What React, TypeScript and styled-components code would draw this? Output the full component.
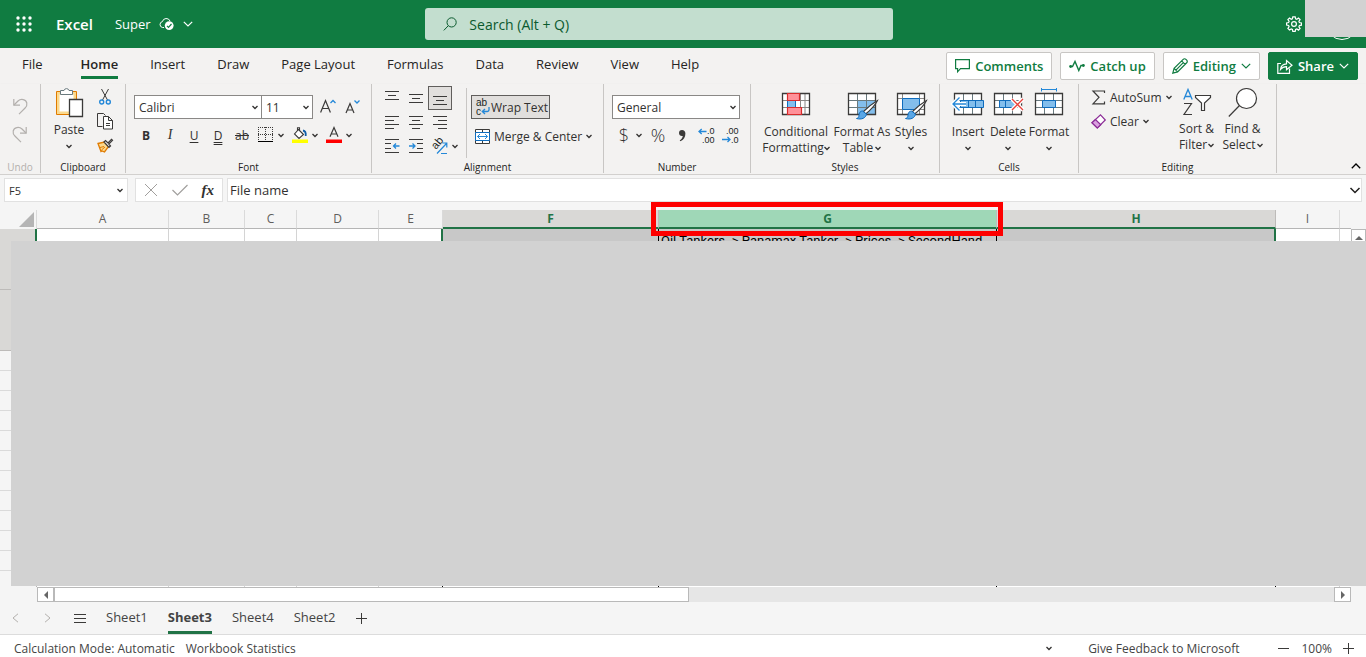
import React from "react";
import styled, { createGlobalStyle, css } from "styled-components";

const font = `"Open Sans", "Noto Sans", sans-serif`;
const green = "#107c41";
const blue = "#2488d8";
const ink = "#3b3a39";

const GlobalStyle = createGlobalStyle`
  *, *::before, *::after { box-sizing: border-box; }
  body { margin: 0; font-family: ${font}; font-size: 12px; color: #323130; background: #f3f2f1; }
  button, input, select { font-family: inherit; font-size: inherit; color: inherit; }
  button { background: none; border: 0; padding: 0; }
  svg { display: block; flex: none; overflow: visible; }
`;

/* ---------- shared pieces ---------- */

type IconProps = { w: number; h: number; color?: string; sharp?: boolean; children: React.ReactNode };
const Icon = ({ w, h, color = ink, sharp, children }: IconProps) => (
  <svg
    width={w}
    height={h}
    viewBox={`0 0 ${w} ${h}`}
    fill="none"
    stroke={color}
    strokeWidth={1}
    shapeRendering={sharp ? "crispEdges" : undefined}
    aria-hidden="true"
  >
    {children}
  </svg>
);

const Caret = () => (
  <Icon w={6} h={5} color="#323130">
    <path d="M.5 1 3 3.500 5.500 1" strokeWidth="1.300" />
  </Icon>
);

const WideCaret = ({ color }: { color: string }) => (
  <Icon w={10} h={6} color={color}>
    <path d="M.8.8 5 5 9.2.8" strokeWidth="1.2" />
  </Icon>
);

/* ---------- page ---------- */

const Page = styled.div`
  position: relative;
  display: flex;
  flex-direction: column;
  height: 100vh;
  min-width: 1280px;
  overflow: hidden;
`;

/* ---------- title bar ---------- */

const TitleBar = styled.header`
  display: grid;
  grid-template-columns: 9fr 468px 10fr;
  align-items: center;
  height: 48px;
  flex: none;
  background: ${green};
  color: #fff;
`;

const TitleLeft = styled.div`
  display: flex;
  align-items: center;
  padding-left: 16px;
`;

const AppName = styled.span`
  margin-left: 24px;
  font-size: 15px;
  font-weight: 600;
`;

const DocButton = styled.button`
  display: flex;
  align-items: center;
  gap: 8px;
  margin-left: 22px;
  font-size: 13px;
`;

const SearchBox = styled.label`
  display: flex;
  align-items: center;
  gap: 12px;
  height: 32px;
  padding: 0 18px;
  border-radius: 3px;
  background: #c3decf;
`;

const SearchInput = styled.input`
  flex: 1;
  border: 0;
  outline: 0;
  padding: 0;
  background: transparent;
  font-size: 14px;
  &::placeholder { color: #0b5a2e; opacity: 1; }
`;

const TitleRight = styled.div`
  display: flex;
  align-items: center;
  justify-content: flex-end;
  gap: 24px;
  padding-right: 8px;
`;

const Avatar = styled.span`
  width: 32px;
  height: 32px;
  border: 1px solid #fff;
  border-radius: 50%;
`;

const AccountMask = styled.div`
  position: absolute;
  top: 0;
  right: 0;
  width: 61px;
  height: 37px;
  background: #d2d2d2;
`;

/* ---------- ribbon tabs ---------- */

const TabRow = styled.div`
  display: flex;
  justify-content: space-between;
  flex: none;
  height: 36px;
  padding: 0 8px 0 6px;
`;

const TabList = styled.nav`
  display: flex;
`;

const Tab = styled.button<{ $active?: boolean }>`
  position: relative;
  height: 32px;
  padding: 0 16px;
  font-size: 13px;
  font-weight: ${(p) => (p.$active ? 600 : 400)};
  color: #252423;
  ${(p) =>
    p.$active &&
    css`
      margin-left: 6px;
      &::after {
        content: "";
        position: absolute;
        left: 16px;
        right: 16px;
        bottom: 1px;
        height: 3px;
        background: ${green};
      }
    `}
`;

const Actions = styled.div`
  display: flex;
  gap: 8px;
  padding-top: 4px;
`;

const ActionButton = styled.button<{ $solid?: boolean }>`
  display: flex;
  align-items: center;
  gap: 5px;
  height: 28px;
  padding: 0 8px;
  border: 1px solid ${(p) => (p.$solid ? green : "#c8c6c4")};
  border-radius: 2px;
  background: ${(p) => (p.$solid ? green : "#fff")};
  color: ${(p) => (p.$solid ? "#fff" : green)};
  font-size: 13px;
  font-weight: 600;
`;

/* ---------- ribbon ---------- */

const Ribbon = styled.div`
  display: flex;
  flex: none;
  height: 91px;
  border-bottom: 1px solid #d2d0ce;
  box-shadow: 0 1px 2px rgba(0, 0, 0, 0.12);
`;

const GroupBox = styled.section<{ $w: number }>`
  display: flex;
  flex-direction: column;
  justify-content: space-between;
  width: ${(p) => p.$w}px;
  height: 89px;
  border-right: 1px solid #c8c6c4;
`;

const GroupBody = styled.div<{ $gap?: number; $left?: number }>`
  display: flex;
  gap: ${(p) => p.$gap ?? 0}px;
  padding-left: ${(p) => p.$left ?? 8}px;
`;

const GroupLabel = styled.div<{ $muted?: boolean }>`
  font-size: 10px;
  line-height: 12px;
  text-align: center;
  color: ${(p) => (p.$muted ? "#b3b0ad" : "#252423")};
`;

type GroupProps = { w: number; label: string; muted?: boolean; gap?: number; left?: number; children: React.ReactNode };
const Group = ({ w, label, muted, gap, left, children }: GroupProps) => (
  <GroupBox $w={w}>
    <GroupBody $gap={gap} $left={left}>{children}</GroupBody>
    <GroupLabel $muted={muted}>{label}</GroupLabel>
  </GroupBox>
);

const Stack = styled.div<{ $gap?: number; $top?: number }>`
  display: flex;
  flex-direction: column;
  gap: ${(p) => p.$gap ?? 0}px;
  padding-top: ${(p) => p.$top ?? 0}px;
`;

const Line = styled.div<{ $gap?: number }>`
  display: flex;
  align-items: center;
  gap: ${(p) => p.$gap ?? 0}px;
`;

const TallRow = styled.div<{ $gap?: number }>`
  display: flex;
  align-items: flex-start;
  gap: ${(p) => p.$gap ?? 0}px;
`;

const SizeTools = styled.div`
  display: flex;
  gap: 1px;
  margin-left: 3px;
`;

const IconButton = styled.button<{ $on?: boolean }>`
  display: flex;
  align-items: center;
  justify-content: center;
  width: 24px;
  height: 24px;
  border: 1px solid ${(p) => (p.$on ? "#605e5c" : "transparent")};
  background: ${(p) => (p.$on ? "#e1dfdd" : "transparent")};
`;

const CaretButton = styled.button<{ $w?: number }>`
  display: flex;
  align-items: center;
  justify-content: flex-start;
  width: ${(p) => p.$w ?? 10}px;
  height: 24px;
`;

const FormatButton = styled(IconButton)<{ $kind: "bold" | "italic" | "under" | "double" | "strike" }>`
  font-size: 12px;
  text-underline-offset: 2px;
  ${(p) => p.$kind === "bold" && "font-weight: 700;"}
  ${(p) => p.$kind === "italic" && "font-style: italic; font-family: 'Liberation Serif', serif; font-size: 14px;"}
  ${(p) => p.$kind === "under" && "text-decoration: underline;"}
  ${(p) => p.$kind === "double" && "text-decoration: underline double;"}
  ${(p) => p.$kind === "strike" && "text-decoration: line-through;"}
`;

const NumberButton = styled(IconButton)`
  font-size: 18px;
  font-weight: 300;
  line-height: 20px;
`;

const TallButton = styled.button<{ $w: number; $icon?: number }>`
  display: flex;
  flex-direction: column;
  align-items: center;
  width: ${(p) => p.$w}px;
  line-height: 16px;
  white-space: nowrap;
  & > svg:first-child { margin-bottom: ${(p) => p.$icon ?? 3}px; }
  & > svg:last-child { margin-top: 6px; }
`;

const RowButton = styled.button<{ $on?: boolean }>`
  display: flex;
  align-items: center;
  gap: ${(p) => (p.$on ? 2 : 4)}px;
  width: ${(p) => (p.$on ? "79px" : "auto")};
  height: 24px;
  padding: 0 3px;
  border: 1px solid ${(p) => (p.$on ? "#605e5c" : "transparent")};
  background: ${(p) => (p.$on ? "#e1dfdd" : "transparent")};
  white-space: nowrap;
`;

const InnerRule = styled.span`
  width: 1px;
  height: 70px;
  margin: 4px 4px 0 6px;
  background: #c8c6c4;
`;

const Combo = styled.span<{ $w: number; $joined?: boolean }>`
  display: flex;
  align-items: center;
  width: ${(p) => p.$w}px;
  height: 24px;
  border: 1px solid #8a8886;
  border-left-width: ${(p) => (p.$joined ? 0 : 1)}px;
  background: #fff;
  & > svg { margin-left: -9px; margin-right: 3px; pointer-events: none; }
`;

const ComboSelect = styled.select`
  flex: 1;
  min-width: 0;
  height: 22px;
  padding: 0 4px;
  border: 0;
  outline: 0;
  appearance: none;
  background: transparent;
`;

type SelectProps = { w: number; label: string; value: string; joined?: boolean };
const DropDown = ({ w, label, value, joined }: SelectProps) => (
  <Combo $w={w} $joined={joined}>
    <ComboSelect aria-label={label} defaultValue={value}>
      <option>{value}</option>
    </ComboSelect>
    <Caret />
  </Combo>
);

const Collapse = styled.button`
  align-self: flex-end;
  margin: 0 5px 5px auto;
`;

/* ---------- formula bar ---------- */

const FormulaBar = styled.div`
  display: flex;
  flex: none;
  gap: 4px;
  height: 35px;
  padding: 3px 4px 8px;
  background: #f5f5f5;
`;

const BarBox = styled.div<{ $w?: number }>`
  display: flex;
  align-items: center;
  ${(p) => (p.$w ? `width: ${p.$w}px;` : "flex: 1;")}
  height: 24px;
  border: 1px solid #e1e1e1;
  background: #fff;
`;

const NameBox = styled(BarBox)`
  margin-right: 3px;
  padding-right: 4px;
`;

const FormulaTools = styled(BarBox)`
  justify-content: space-between;
  padding: 0 8px;
`;

const BarInput = styled.input<{ $small?: boolean }>`
  flex: 1;
  min-width: 0;
  height: 22px;
  padding: 0 ${(p) => (p.$small ? 4 : 2)}px;
  border: 0;
  outline: 0;
  background: transparent;
  font-size: ${(p) => (p.$small ? 11 : 13)}px;
`;

const FxMark = styled.button`
  font-family: "Liberation Serif", serif;
  font-size: 15px;
  font-style: italic;
  font-weight: 700;
`;

/* ---------- sheet grid ---------- */

const GridArea = styled.main`
  position: relative;
  display: flex;
  flex: 1;
  min-height: 0;
  background: #f5f5f5;
`;

const GridClip = styled.div`
  flex: 1;
  min-width: 0;
  contain: size;
  clip-path: inset(-20px 0 0 0);
`;

const Sheet = styled.table`
  width: 100%;
  table-layout: fixed;
  border-collapse: separate;
  border-spacing: 0;
`;

const ColumnHead = styled.th<{ $state?: "selected" | "marked"; $last?: boolean }>`
  position: relative;
  height: 19px;
  padding: 0;
  border-right: ${(p) => (p.$last ? "0" : "1px solid #dadada")};
  border-bottom: 1px solid #b5b5b5;
  font-size: 12px;
  font-weight: 400;
  line-height: 16px;
  color: #605e5c;
  ${(p) =>
    p.$state &&
    css`
      border-right-color: #bdbbb9;
      border-bottom: 2px solid #217346;
      background: ${p.$state === "marked" ? "#9fd7b7" : "#d9d8d6"};
      color: #217346;
      font-weight: 700;
    `}
`;

const HighlightFrame = styled.span`
  position: absolute;
  inset: -8px -7px -9px -8px;
  z-index: 1;
  border: 5px solid #fe0000;
`;

const CornerCell = styled.th`
  padding: 0 2px 0 0;
  height: 19px;
  border-right: 1px solid #dadada;
  & > svg { margin-left: auto; }
`;

const RowHead = styled.th<{ $tall?: boolean }>`
  height: ${(p) => (p.$tall ? 61 : 20)}px;
  border-bottom: 1px solid ${(p) => (p.$tall ? "#bdbbb9" : "#dadada")};
  border-right: ${(p) => (p.$tall ? "2px solid #217346" : "1px solid #b5b5b5")};
  background: ${(p) => (p.$tall ? "#d9d8d6" : "#f5f5f5")};
`;

const Cell = styled.td<{ $sel?: boolean; $right: string }>`
  padding: 3px 2px 0;
  border-right: ${(p) => p.$right};
  border-bottom: 1px solid #d4d4d4;
  background: ${(p) => (p.$sel ? "#c8c8c8" : "#fff")};
  vertical-align: top;
  font-family: Roboto, sans-serif;
  font-size: 13px;
  line-height: 18px;
  white-space: nowrap;
  color: #000;
`;

const VerticalBar = styled.div`
  width: 15px;
  padding-top: 19px;
`;

const ArrowButton = styled.button<{ $w: number; $h: number }>`
  display: flex;
  align-items: center;
  justify-content: center;
  width: ${(p) => p.$w}px;
  height: ${(p) => p.$h}px;
  border: 1px solid #b9b9b9;
  background: #fff;
`;

const GridMask = styled.div`
  position: absolute;
  top: 31px;
  left: 11px;
  right: 0;
  bottom: 1px;
  z-index: 2;
  background: #d2d2d2;
`;

const HorizontalBar = styled.div`
  display: flex;
  flex: none;
  height: 15px;
  padding: 0 15px 0 37px;
  background: #f5f5f5;
`;

const Track = styled.div`
  flex: 1;
  background: #e6e6e6;
`;

const Thumb = styled.div`
  width: 50%;
  max-width: 635px;
  height: 15px;
  border: 1px solid #b9b9b9;
  background: #fff;
`;

/* ---------- sheet tabs and status bar ---------- */

const SheetBar = styled.nav`
  display: flex;
  align-items: center;
  flex: none;
  height: 33px;
  padding-left: 12px;
  border-bottom: 1px solid #dcdcdc;
  background: #f5f5f5;
`;

const NavButton = styled.button<{ $w: number }>`
  display: flex;
  align-items: center;
  width: ${(p) => p.$w}px;
  height: 24px;
`;

const SheetTab = styled.button<{ $active?: boolean }>`
  height: 32px;
  margin-right: 20px;
  padding: 2px 0 1px;
  border-bottom: 3px solid ${(p) => (p.$active ? "#217346" : "transparent")};
  font-size: 13px;
  font-weight: ${(p) => (p.$active ? 700 : 400)};
  color: #444;
`;

const StatusBar = styled.footer`
  display: flex;
  align-items: center;
  flex: none;
  height: 22px;
  padding: 4px 12px 0 14px;
  background: #fff;
  color: #444;
  font-size: 12px;
`;

const StatusItem = styled.button`
  margin-right: 11px;
`;

const StatusRight = styled.div`
  display: flex;
  align-items: center;
  margin-left: auto;
`;

const Feedback = styled.button`
  margin: 0 39px 0 36px;
`;

const Zoom = styled.span`
  margin: 0 11px 0 12px;
`;

/* ---------- drawings ---------- */

const Waffle = () => (
  <svg width="16" height="16" viewBox="0 0 16 16" fill="#fff" aria-hidden="true">
    {[2, 8, 14].map((y) => [2, 8, 14].map((x) => <circle key={`${x}-${y}`} cx={x} cy={y} r="1.7" />))}
  </svg>
);

const CloudSaved = () => (
  <Icon w={16} h={14} color="#fff">
    <path d="M5 10.5H3.6A3 3 0 0 1 3.4 4.6 4 4 0 0 1 11 4" />
    <circle cx="10.2" cy="8.6" r="4.4" fill="#fff" stroke="none" />
    <path d="M8 8.8l1.5 1.6 3-3.4" stroke={green} strokeWidth="1.2" />
  </Icon>
);

const SearchIcon = () => (
  <Icon w={14} h={15} color="#0b5a2e">
    <circle cx="8.6" cy="5.4" r="4.6" />
    <path d="M5.3 8.7.8 13.4" />
  </Icon>
);

const Gear = () => (
  <Icon w={16} h={16} color="#fff">
    <path
      d="M6.8.8h2.4l.4 2 1.2.5L12.5 2l1.6 1.6-1.2 1.7.5 1.2 2 .4v2.3l-2 .4-.5 1.2 1.2 1.7-1.6 1.6-1.7-1.2-1.2.5-.4 2H6.8l-.4-2-1.2-.5L3.5 14l-1.6-1.6 1.2-1.7-.5-1.2-2-.4V6.9l2-.4.5-1.2L1.9 3.6 3.5 2l1.7 1.2 1.2-.5z"
      strokeWidth="1.2"
    />
    <circle cx="8" cy="8" r="2.4" strokeWidth="1.2" />
  </Icon>
);

const CommentIcon = () => (
  <Icon w={15} h={14} color={green}>
    <path d="M.6.6h13.8v9H5.5L2.6 12.8V9.6H.6z" strokeWidth="1.2" />
  </Icon>
);

const PulseIcon = () => (
  <Icon w={16} h={12} color={green}>
    <path d="M1.5 6.5h2L6 1.5 9.8 10.5 12 5.5h2.5" strokeWidth="1.4" />
    <circle cx="1.6" cy="6.5" r="1.4" fill={green} stroke="none" />
    <circle cx="14.4" cy="5.5" r="1.4" fill={green} stroke="none" />
  </Icon>
);

const PencilIcon = () => (
  <Icon w={16} h={16} color={green}>
    <path d="M.8 15.2l1.3-4.8L11.2 1.3a1.9 1.9 0 0 1 2.7 0l.8.8a1.9 1.9 0 0 1 0 2.7L5.6 13.9zM9.6 2.9l3.5 3.5M2.1 10.4l3.5 3.5M3.9 12.1l7.4-7.4" strokeWidth="1.2" />
  </Icon>
);

const ShareIcon = () => (
  <Icon w={16} h={15} color="#fff">
    <path d="M4 4.5H.8v9.9h11.7V9.5" strokeWidth="1.2" />
    <path d="M3.5 10.5c.4-3.8 2.8-5.6 6-5.7V1.5l5.5 4.8-5.5 4.5V7.6c-2.5 0-4.3.7-6 2.9z" strokeWidth="1.2" />
  </Icon>
);

const UndoIcon = ({ flip }: { flip?: boolean }) => (
  <Icon w={16} h={17} color="#b3b0ad">
    <g transform={flip ? "matrix(-1 0 0 1 16 0)" : undefined} strokeWidth="1.2">
      <path d="M1.8 1v6.2H8" />
      <path d="M2 7 6 3c3-2.8 8-1.6 8.8 2 .4 2-.3 3.6-1.7 5L7 16.2" />
    </g>
  </Icon>
);

const PasteIcon = () => (
  <Icon w={28} h={31}>
    <path d="M1.5 4.5h20v23h-20z" fill="#fbd98d" stroke="#e07b00" />
    <path d="M4.5 7.5h14v17h-14z" fill="#fff" stroke="none" />
    <path d="M5.5 7.5V3.5h3.5a2.6 2.6 0 0 1 5 0h3.5v4z" fill="#fff" stroke="#69797e" />
    <path d="M14.5 12.5h13v17h-13z" fill="#fff" stroke={ink} strokeWidth="1.3" />
  </Icon>
);

const CutIcon = () => (
  <Icon w={12} h={16}>
    <path d="M2.5 0 8.5 11M9.5 0 3.5 11" />
    <circle cx="2.7" cy="13" r="2" stroke={blue} strokeWidth="1.4" />
    <circle cx="9.3" cy="13" r="2" stroke={blue} strokeWidth="1.4" />
  </Icon>
);

const CopyIcon = () => (
  <Icon w={16} h={17}>
    <path d="M5.5 13.5h-5V.5h6l2 2" />
    <path d="M6.5 3.5h5l4 4v8.5h-9zM11.5 3.5v4h4M9 10.5h4M9 12.5h4" fill="#fff" />
  </Icon>
);

const BrushIcon = () => (
  <Icon w={16} h={15}>
    <path d="M1 5.5l6.5-1.5 4 4.5-4 5.500-2.500-1-1 .5z" fill="#fbd98d" stroke="#e07b00" strokeWidth="1.300" />
    <path d="M3 9.500l4-1M4.500 12l3.500-3" stroke="#e07b00" />
    <path d="M7 4l1.500-1.500L11 5l3.500-3.700 1 1-3.700 3.700L13.500 8 12 9.300z" fill="#f3f2f1" strokeWidth="1.200" />
  </Icon>
);

const GrowFont = ({ shrink }: { shrink?: boolean }) => (
  <Icon w={16} h={15}>
    {shrink ? (
      <>
        <path d="M1 13 5 3.500l4 9.500M2.500 10h5" strokeWidth="1.200" />
        <path d="M9.500.5 12 3l2.500-2.500" stroke={blue} strokeWidth="1.300" />
      </>
    ) : (
      <>
        <path d="M.6 12.500 5.500.5l4.900 12M2.500 8.500h6" strokeWidth="1.200" />
        <path d="M10.500 3 13 .5 15.500 3" stroke={blue} strokeWidth="1.300" />
      </>
    )}
  </Icon>
);

const BordersIcon = () => (
  <Icon w={16} h={16} sharp>
    <path d="M.5 0V14M14.500 0V14M7.500 0V14M0 .5H15M0 7.500H15" strokeDasharray="1 1" />
    <path d="M0 14.500H15" stroke="#000" strokeWidth="1.500" />
  </Icon>
);

const FillIcon = () => (
  <Icon w={16} h={16}>
    <path d="M6.500 2.500 11.500 7.500 7 11.500 2.500 7zM5.500 4V.8h2V4" fill="#fff" strokeWidth="1.100" />
    <path d="M11 3.500c2.800.5 3 3 2.700 5.500" stroke="#0f5ea8" strokeWidth="1.800" />
    <path d="M0 12.500h16v3.500H0z" fill="#ff0" stroke="none" />
  </Icon>
);

const FontColorIcon = () => (
  <Icon w={16} h={16}>
    <path d="M4 9.800 8 .6l4 9.200M5.300 7h5.400" strokeWidth="1.200" />
    <path d="M0 12.500h16v3.500H0z" fill="#f00" stroke="none" />
  </Icon>
);

const CommaIcon = () => (
  <Icon w={10} h={15}>
    <path d="M5 2a3 3 0 0 0-3 3c0 1.800 1.300 3 3 3h.8c-.3 1.800-1.300 3.300-3.100 4.500l.7.800C6.800 11.800 8.400 9 8.400 5.500 8.400 3.300 7 2 5 2z" fill={ink} stroke="none" />
  </Icon>
);

const AlignIcon = ({ rows }: { rows: [number, number, number][] }) => (
  <Icon w={14} h={14} sharp>
    {rows.map(([x1, x2, y]) => (
      <path key={y} d={`M${x1} ${y}.5H${x2}`} />
    ))}
  </Icon>
);

const IndentIcon = ({ out }: { out?: boolean }) => (
  <Icon w={15} h={14}>
    <path d={out ? "M0 .5h14M0 4.500h6M0 9.500h6M0 13.500h14" : "M0 .5h14M8 4.500h6M8 9.500h6M0 13.500h14"} />
    <path d={out ? "M14.500 7H8.500M11 4.500 8.500 7 11 9.500" : "M0 7h6M3.500 4.500 6 7 3.500 9.500"} stroke={blue} strokeWidth="1.300" />
  </Icon>
);

const IconText = styled.text<{ $size?: number }>`
  font-family: "Liberation Sans", sans-serif;
  font-size: ${(p) => p.$size ?? 9}px;
  fill: #201f1e;
  stroke: none;
`;

const OrientIcon = () => (
  <Icon w={16} h={17}>
    <IconText $size={11} transform="translate(4 12) rotate(-50)">ab</IconText>
    <path d="M5 15.500 14.500 5.500M10.500 5h4.300v4.500M9 15.500h6" stroke={blue} strokeWidth="1.200" />
  </Icon>
);

const WrapIcon = () => (
  <Icon w={14} h={19}>
    <IconText x="1" y="8" $size={10}>ab</IconText>
    <IconText x="1" y="17" $size={10}>c</IconText>
    <path d="M14 9v2a2 2 0 0 1-2 2.500H7.500M10 11l-2.700 2.500L10 16" stroke={blue} strokeWidth="1.300" />
  </Icon>
);

const MergeIcon = () => (
  <Icon w={15} h={15}>
    <path d="M.5.5h14v14H.5zM7.500.5V4M7.500 11v3.500" fill="#fff" />
    <path d="M.5 3.500h14v8H.5z" fill="#fff" stroke="#0f6cbd" />
    <path d="M2.500 7.500h10M5 5 2.500 7.500 5 10M10 5l2.500 2.500L10 10" stroke={blue} />
  </Icon>
);

const DecimalIcon = ({ more }: { more?: boolean }) => (
  <Icon w={16} h={18}>
    <IconText x={more ? 9 : 4} y="8">{more ? ".0" : ".00"}</IconText>
    <IconText x={more ? 4 : 9} y="17">{more ? ".00" : ".0"}</IconText>
    <path d={more ? "M8.500 5.500H1M3.700 3 1 5.500 3.700 8" : "M0 13.500h8M5.500 11 8 13.500 5.500 16"} stroke={blue} strokeWidth="1.300" />
  </Icon>
);

const ConditionalIcon = () => (
  <Icon w={28} h={22}>
    <path d="M.5.5h27v21H.5zM.5 7.500h27M.5 14.500h27M18.500.5v21M23 .5v21" fill="#fff" stroke="#8a8886" />
    <path d="M.5.5h27v21H.5z" strokeWidth="1.300" />
    <path d="M5.500 7.500h8v7h-8z" fill="#83beec" stroke="#0f6cbd" />
    <path d="M5.500.5h12v7h-12zM5.500 14.500h14v7h-14z" fill="#ff9199" stroke="#d92c2c" strokeWidth="1.200" />
  </Icon>
);

const StyleBrush = () => (
  <>
    <path d="M29.500 7.500C27 9 19 15 15.500 18.500l2 2.500C22 18 28 11 29.500 7.500z" fill="#fff" strokeWidth="1.100" />
    <path d="M14.500 18l4 3c-.5 4-5 6-10 4.500 3-.5 2-3 3-5.500.5-1.200 1.700-2 3-2z" fill="#5aa7e6" stroke="#0f6cbd" />
  </>
);

const TableIcon = () => (
  <Icon w={28} h={28}>
    <path d="M.5.5h27v21H.5z" fill="#fff" />
    <path d="M9.500 7.500h18v14h-18z" fill="#83beec" stroke="#0f6cbd" />
    <path d="M9.500.5v21M18.500.5v21M.5 7.500h27M.5 14.500h27" stroke="#69797e" />
    <path d="M.5.5h27v21H.5z" strokeWidth="1.300" />
    <StyleBrush />
  </Icon>
);

const CellStylesIcon = () => (
  <Icon w={28} h={28}>
    <path d="M.5.5h27v21H.5zM5.500.5v21M22.500.5v21M.5 5.500h27M.5 16.500h27" fill="#fff" stroke="#8a8886" />
    <path d="M.5.5h27v21H.5z" strokeWidth="1.300" />
    <path d="M5.500 5.500h17v11h-17z" fill="#83beec" stroke="#0f6cbd" />
    <StyleBrush />
  </Icon>
);

const CellGrid = () => (
  <>
    <path d="M2.500 5.500h27v21h-27z" fill="#fff" />
    <path d="M11.500 5.500v21M20.500 5.500v21M2.500 12.500h27M2.500 19.500h27" stroke="#69797e" />
    <path d="M2.500 5.500h27v21h-27z" strokeWidth="1.300" />
  </>
);

const InsertIcon = () => (
  <Icon w={32} h={28}>
    <CellGrid />
    <path d="M8.500 12.500h23v7h-23zM16.500 12.500v7M23.500 12.500v7" fill="#83beec" stroke="#0f6cbd" />
    <path d="M14 16H1M7.500 9.500 1 16l6.500 6.500" stroke="#fff" strokeWidth="4" />
    <path d="M14 16H1M7.500 9.500 1 16l6.500 6.500" stroke={blue} strokeWidth="1.300" />
  </Icon>
);

const DeleteIcon = () => (
  <Icon w={32} h={28}>
    <CellGrid />
    <path d="M7.500 12.500h16v7h-16zM13.500 12.500v7" fill="#83beec" stroke="#0f6cbd" />
    <path d="M20 11l11 11M31 11 20 22" stroke="#fff" strokeWidth="4" />
    <path d="M20 11l11 11M31 11 20 22" stroke="#e8413c" strokeWidth="1.300" />
  </Icon>
);

const FormatIcon = () => (
  <Icon w={32} h={28}>
    <CellGrid />
    <path d="M9.500 12.500h13v7h-13z" fill="#83beec" stroke="#0f6cbd" />
    <path d="M8.500 1.500h15M8.500 0v3.500M23.500 0v3.500" stroke={blue} />
  </Icon>
);

const SumIcon = () => (
  <Icon w={15} h={15}>
    <path d="M13.500 3V1H2L8 7.300 2 13.800h11.500V11.500" strokeWidth="1.200" />
  </Icon>
);

const EraserIcon = () => (
  <Icon w={15} h={15} color="#8b2b96">
    <path d="M9.500.8 14.300 6 6.300 14 1 8.800z" fill="#fff" strokeWidth="1.200" />
    <path d="M4.500 5.500 1 8.800 6.300 14l3.500-3.300z" fill="#d9a0df" strokeWidth="1.200" />
  </Icon>
);

const SortIcon = () => (
  <Icon w={28} h={28}>
    <path d="M.8 11.500 5 1.500l4.200 10M2.300 8.500h5.400" stroke={blue} strokeWidth="1.300" />
    <path d="M1 15.500h7.500L1 26.500h8" strokeWidth="1.200" />
    <path d="M12.500 7.500h15v2l-6 5.500v7.500h-3V15l-6-5.500z" fill="#fff" strokeWidth="1.200" />
  </Icon>
);

const FindIcon = () => (
  <Icon w={30} h={30}>
    <circle cx="18.500" cy="10.500" r="10" fill="#fff" strokeWidth="1.200" />
    <path d="M11.500 17.500.8 28.500" strokeWidth="1.200" />
  </Icon>
);

const Triangle = ({ dir }: { dir: "up" | "left" | "right" }) => (
  <svg width="8" height="8" viewBox="0 0 8 8" fill="#666" aria-hidden="true">
    <path d={dir === "up" ? "M0 6 4 2l4 4z" : dir === "left" ? "M6 0v8L2 4z" : "M2 0v8l4-4z"} />
  </svg>
);

/* ---------- data ---------- */

const tabs = ["File", "Home", "Insert", "Draw", "Page Layout", "Formulas", "Data", "Review", "View", "Help"];
const sheets = ["Sheet1", "Sheet3", "Sheet4", "Sheet2"];
const columns: { name: string; width?: number; state?: "selected" | "marked" }[] = [
  { name: "A", width: 132 },
  { name: "B", width: 76 },
  { name: "C", width: 52 },
  { name: "D", width: 82 },
  { name: "E", width: 64 },
  { name: "F", width: 216, state: "selected" },
  { name: "G", width: 338, state: "marked" },
  { name: "H", width: 279, state: "selected" },
  { name: "I", width: 64 },
  { name: "" },
];

const cellEdge = (name: string, selectedRow: boolean) => {
  if (name === "") return "0";
  if (name === "F" || name === "G") return "1px solid #000";
  if (name === "E" || name === "H") return selectedRow ? "2px solid #217346" : "1px solid #000";
  return "1px solid #d4d4d4";
};

export default function App() {
  return (
    <Page>
      <GlobalStyle />
      <TitleBar>
        <TitleLeft>
          <button aria-label="App launcher"><Waffle /></button>
          <AppName>Excel</AppName>
          <DocButton>
            Super <CloudSaved /> <WideCaret color="#fff" />
          </DocButton>
        </TitleLeft>
        <SearchBox>
          <SearchIcon />
          <SearchInput aria-label="Search" placeholder="Search (Alt + Q)" />
        </SearchBox>
        <TitleRight>
          <button aria-label="Settings"><Gear /></button>
          <Avatar />
        </TitleRight>
      </TitleBar>
      <AccountMask />

      <TabRow>
        <TabList>
          {tabs.map((t) => (
            <Tab key={t} $active={t === "Home"}>{t}</Tab>
          ))}
        </TabList>
        <Actions>
          <ActionButton><CommentIcon />Comments</ActionButton>
          <ActionButton><PulseIcon />Catch up</ActionButton>
          <ActionButton><PencilIcon />Editing <WideCaret color={green} /></ActionButton>
          <ActionButton $solid><ShareIcon />Share <WideCaret color="#fff" /></ActionButton>
        </Actions>
      </TabRow>

      <Ribbon>
        <Group w={41} label="Undo" muted>
          <Stack $top={10} $gap={4}>
            <IconButton aria-label="Undo"><UndoIcon /></IconButton>
            <IconButton aria-label="Redo"><UndoIcon flip /></IconButton>
          </Stack>
        </Group>

        <Group w={85} label="Clipboard" gap={3} left={7}>
          <Stack $top={3}>
            <TallButton $w={42} $icon={4}>
              <PasteIcon />
              Paste
              <Caret />
            </TallButton>
          </Stack>
          <Stack $top={1}>
            <IconButton aria-label="Cut"><CutIcon /></IconButton>
            <IconButton aria-label="Copy"><CopyIcon /></IconButton>
            <IconButton aria-label="Format painter"><BrushIcon /></IconButton>
          </Stack>
        </Group>

        <Group w={246} label="Font">
          <Stack $top={11} $gap={4}>
            <Line>
              <DropDown w={128} label="Font" value="Calibri" />
              <DropDown w={51} label="Font size" value="11" joined />
              <SizeTools>
                <IconButton aria-label="Grow font"><GrowFont /></IconButton>
                <IconButton aria-label="Shrink font"><GrowFont shrink /></IconButton>
              </SizeTools>
            </Line>
            <Line>
              <FormatButton $kind="bold">B</FormatButton>
              <FormatButton $kind="italic">I</FormatButton>
              <FormatButton $kind="under">U</FormatButton>
              <FormatButton $kind="double">D</FormatButton>
              <FormatButton $kind="strike">ab</FormatButton>
              <IconButton aria-label="Borders"><BordersIcon /></IconButton>
              <CaretButton aria-label="Border options"><Caret /></CaretButton>
              <IconButton aria-label="Fill color"><FillIcon /></IconButton>
              <CaretButton aria-label="Fill options"><Caret /></CaretButton>
              <IconButton aria-label="Font color"><FontColorIcon /></IconButton>
              <CaretButton aria-label="Font color options"><Caret /></CaretButton>
            </Line>
          </Stack>
        </Group>

        <Group w={232} label="Alignment">
          <Stack $top={2}>
            <Line>
              <IconButton aria-label="Top align"><AlignIcon rows={[[0, 14, 0], [3, 11, 4], [0, 14, 8]]} /></IconButton>
              <IconButton aria-label="Middle align"><AlignIcon rows={[[0, 14, 3], [3, 11, 7], [0, 14, 11]]} /></IconButton>
              <IconButton aria-label="Bottom align" $on><AlignIcon rows={[[0, 14, 5], [3, 11, 9], [0, 14, 13]]} /></IconButton>
            </Line>
            <Line>
              <IconButton aria-label="Align left"><AlignIcon rows={[[0, 14, 1], [0, 9, 5], [0, 14, 9], [0, 9, 13]]} /></IconButton>
              <IconButton aria-label="Center"><AlignIcon rows={[[0, 14, 1], [3, 11, 5], [0, 14, 9], [3, 11, 13]]} /></IconButton>
              <IconButton aria-label="Align right"><AlignIcon rows={[[0, 14, 1], [5, 14, 5], [0, 14, 9], [5, 14, 13]]} /></IconButton>
            </Line>
            <Line>
              <IconButton aria-label="Decrease indent"><IndentIcon out /></IconButton>
              <IconButton aria-label="Increase indent"><IndentIcon /></IconButton>
              <IconButton aria-label="Orientation"><OrientIcon /></IconButton>
              <CaretButton aria-label="Orientation options" $w={8}><Caret /></CaretButton>
            </Line>
          </Stack>
          <InnerRule />
          <Stack $top={11} $gap={5}>
            <RowButton $on><WrapIcon />Wrap Text</RowButton>
            <RowButton><MergeIcon />Merge &amp; Center <Caret /></RowButton>
          </Stack>
        </Group>

        <Group w={147} label="Number">
          <Stack $top={11} $gap={4}>
            <DropDown w={128} label="Number format" value="General" />
            <Line>
              <NumberButton>$</NumberButton>
              <CaretButton aria-label="Currency options"><Caret /></CaretButton>
              <NumberButton>%</NumberButton>
              <IconButton aria-label="Comma style"><CommaIcon /></IconButton>
              <IconButton aria-label="Increase decimal"><DecimalIcon more /></IconButton>
              <IconButton aria-label="Decrease decimal"><DecimalIcon /></IconButton>
            </Line>
          </Stack>
        </Group>

        <Group w={189} label="Styles">
          <Stack $top={9}>
            <TallRow>
              <TallButton $w={74} $icon={9}>
                <ConditionalIcon />
                <span>Conditional</span>
                <Line>Formatting <Caret /></Line>
              </TallButton>
              <TallButton $w={58}>
                <TableIcon />
                <span>Format As</span>
                <Line $gap={2}>Table <Caret /></Line>
              </TallButton>
              <TallButton $w={40}>
                <CellStylesIcon />
                Styles
                <Caret />
              </TallButton>
            </TallRow>
          </Stack>
        </Group>

        <Group w={139} label="Cells">
          <Stack $top={4}>
            <TallRow>
              <TallButton $w={40} $icon={8}><InsertIcon />Insert<Caret /></TallButton>
              <TallButton $w={40} $icon={8}><DeleteIcon />Delete<Caret /></TallButton>
              <TallButton $w={42} $icon={8}><FormatIcon />Format<Caret /></TallButton>
            </TallRow>
          </Stack>
        </Group>

        <Group w={198} label="Editing">
          <Stack $top={1}>
            <RowButton><SumIcon />AutoSum <Caret /></RowButton>
            <RowButton><EraserIcon />Clear <Caret /></RowButton>
          </Stack>
          <Stack $top={4}>
            <TallRow $gap={4}>
              <TallButton $w={42} $icon={5}>
                <SortIcon />
                <span>Sort &amp;</span>
                <Line $gap={1}>Filter <Caret /></Line>
              </TallButton>
              <TallButton $w={42}>
                <FindIcon />
                <span>Find &amp;</span>
                <Line $gap={1}>Select <Caret /></Line>
              </TallButton>
            </TallRow>
          </Stack>
        </Group>
        <Collapse aria-label="Collapse ribbon">
          <Icon w={10} h={6} color="#000"><path d="M.8 5.200 5 1l4.200 4.200" strokeWidth="1.300" /></Icon>
        </Collapse>
      </Ribbon>

      <FormulaBar>
        <NameBox $w={124}>
          <BarInput aria-label="Name box" defaultValue="F5" $small />
          <Caret />
        </NameBox>
        <FormulaTools $w={88}>
          <button aria-label="Cancel">
            <Icon w={14} h={14} color="#a19f9d"><path d="M1 1l12 12M13 1 1 13" /></Icon>
          </button>
          <button aria-label="Enter">
            <Icon w={16} h={12} color="#a19f9d"><path d="M.5 6 5.500 11 15.500 1" strokeWidth="1.200" /></Icon>
          </button>
          <FxMark>fx</FxMark>
        </FormulaTools>
        <BarBox>
          <BarInput aria-label="Formula" defaultValue="File name" />
          <button aria-label="Expand formula bar">
            <Icon w={12} h={7} color="#201f1e"><path d="M1.500 1 6 5.500 10.500 1" strokeWidth="1.500" /></Icon>
          </button>
        </BarBox>
      </FormulaBar>

      <GridArea>
        <GridClip>
          <Sheet>
            <colgroup>
              <col width={37} />
              {columns.map((c) => <col key={c.name} width={c.width} />)}
            </colgroup>
            <thead>
              <tr>
                <CornerCell aria-label="Select all">
                  <svg width="15" height="15" viewBox="0 0 15 15" fill="#b5b5b5" aria-hidden="true"><path d="M15 0v15H0z" /></svg>
                </CornerCell>
                {columns.map((c) => (
                  <ColumnHead key={c.name} $state={c.state} $last={c.name === ""} scope="col">
                    {c.name}
                    {c.state === "marked" && <HighlightFrame />}
                  </ColumnHead>
                ))}
              </tr>
            </thead>
            <tbody>
              {Array.from({ length: 14 }, (_, r) => (
                <tr key={r}>
                  <RowHead $tall={r < 2} scope="row" aria-label={`Row ${r + 5}`} />
                  {columns.map((c) => (
                    <Cell key={c.name} $sel={!!c.state && r < 2} $right={cellEdge(c.name, r < 2)}>
                      {c.name === "G" && r === 0 ? "Oil Tankers -> Panamax Tanker -> Prices -> SecondHand" : null}
                    </Cell>
                  ))}
                </tr>
              ))}
            </tbody>
          </Sheet>
        </GridClip>
        <VerticalBar>
          <ArrowButton $w={15} $h={17} aria-label="Scroll up"><Triangle dir="up" /></ArrowButton>
        </VerticalBar>
        <GridMask />
      </GridArea>

      <HorizontalBar>
        <ArrowButton $w={17} $h={15} aria-label="Scroll left"><Triangle dir="left" /></ArrowButton>
        <Track><Thumb /></Track>
        <ArrowButton $w={17} $h={15} aria-label="Scroll right"><Triangle dir="right" /></ArrowButton>
      </HorizontalBar>

      <SheetBar>
        <NavButton $w={32} aria-label="Previous sheet">
          <Icon w={7} h={10} color="#b3b0ad"><path d="M6 .8 1 5l5 4.200" /></Icon>
        </NavButton>
        <NavButton $w={30} aria-label="Next sheet">
          <Icon w={7} h={10} color="#b3b0ad"><path d="M1 .8 6 5 1 9.200" /></Icon>
        </NavButton>
        <NavButton $w={32} aria-label="All sheets">
          <Icon w={12} h={11} sharp><path d="M0 1.500h12M0 5.500h12M0 9.500h12" /></Icon>
        </NavButton>
        {sheets.map((s) => (
          <SheetTab key={s} $active={s === "Sheet3"}>{s}</SheetTab>
        ))}
        <NavButton $w={12} aria-label="New sheet">
          <Icon w={11} h={11} sharp><path d="M0 5.500h11M5.500 0v11" /></Icon>
        </NavButton>
      </SheetBar>

      <StatusBar>
        <StatusItem>Calculation Mode: Automatic</StatusItem>
        <StatusItem>Workbook Statistics</StatusItem>
        <StatusRight>
          <button aria-label="Status options"><Caret /></button>
          <Feedback>Give Feedback to Microsoft</Feedback>
          <button aria-label="Zoom out"><Icon w={11} h={11} sharp><path d="M0 5.500h11" /></Icon></button>
          <Zoom>100%</Zoom>
          <button aria-label="Zoom in"><Icon w={11} h={11} sharp><path d="M0 5.500h11M5.500 0v11" /></Icon></button>
        </StatusRight>
      </StatusBar>
    </Page>
  );
}
